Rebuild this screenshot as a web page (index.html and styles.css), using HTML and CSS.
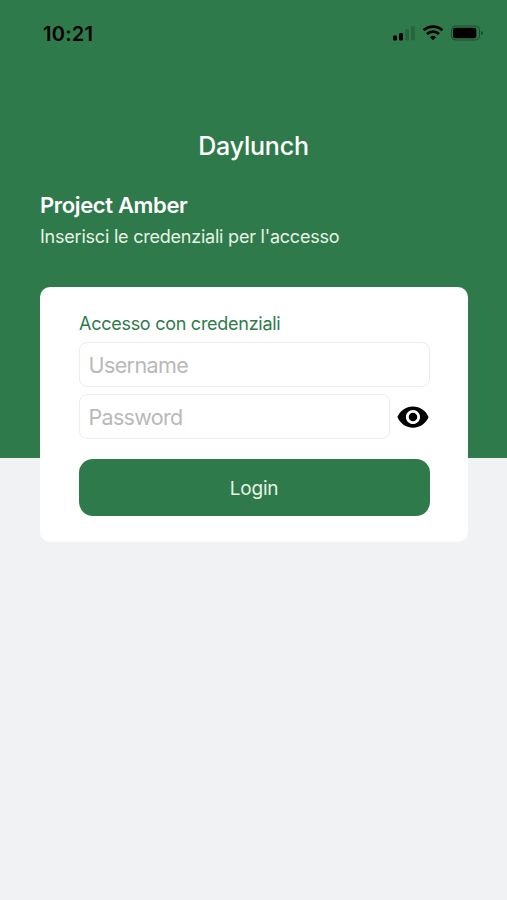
FILE: index.html
```html
<!DOCTYPE html>
<html lang="it">
<head>
<meta charset="utf-8">
<title>Daylunch</title>
<link rel="stylesheet" href="styles.css">
</head>
<body>
<div class="status">
  <span class="clock">10:21</span>
  <svg class="status-icons" width="92" height="18" viewBox="0 0 92 18">
    <g>
      <rect x="1" y="11.500" width="4" height="5" rx="1.200"/>
      <rect x="7" y="9" width="4" height="7.500" rx="1.200"/>
      <g opacity=".16"><rect x="13" y="5" width="4" height="11.500" rx="1.200"/><rect x="19" y="2" width="4" height="14.500" rx="1.200"/></g>
    </g>
    <g fill="none" stroke="#000" stroke-width="2.800">
      <path d="M31.700 6.300a13.500 13.500 0 0 1 18.600 0"/>
      <path d="M35 10a8.600 8.600 0 0 1 12 0"/>
    </g>
    <path d="M41 16.300l-3-3.100a4.400 4.400 0 0 1 6 0z"/>
    <rect x="59.500" y="2" width="28" height="14" rx="4" fill="none" stroke="#000" stroke-opacity=".38"/>
    <rect x="61" y="3.800" width="23.400" height="10.400" rx="2.200"/>
    <path d="M89.200 7q1.700.6 1.700 2t-1.700 2z" opacity=".5"/>
  </svg>
</div>
<h1 class="brand"><span>Daylunch</span></h1>
<main class="content">
  <h2 class="project"><span>Project Amber</span></h2>
  <p class="intro"><span>Inserisci le credenziali per l'accesso</span></p>
  <form class="card">
    <p class="card-title"><span>Accesso con credenziali</span></p>
    <input class="field" type="text" placeholder="Username">
    <div class="password-row">
      <input class="field" type="password" placeholder="Password">
      <svg class="eye" width="34" height="34" viewBox="0 0 24 24"><path d="M12 4.500C7 4.500 2.730 7.610 1 12c1.730 4.390 6 7.500 11 7.500s9.270-3.110 11-7.500c-1.730-4.390-6-7.500-11-7.500zM12 17c-2.760 0-5-2.240-5-5s2.240-5 5-5 5 2.240 5 5-2.240 5-5 5zm0-8c-1.660 0-3 1.340-3 3s1.340 3 3 3 3-1.340 3-3-1.340-3-3-3z"/></svg>
    </div>
    <button class="login" type="button">Login</button>
  </form>
</main>
</body>
</html>
```
FILE: styles.css
```css
* { box-sizing: border-box; }
body {
  margin: 0;
  min-height: 900px;
  font-family: Inter, "Liberation Sans", sans-serif;
  color: #fff;
  background: linear-gradient(#2f7a4b 458px, #f1f2f4 458px);
}
h1, h2, p { margin: 0; }
.status {
  height: 66px;
  padding: 0 23px 0 43px;
  display: flex;
  align-items: center;
  justify-content: space-between;
  color: #000;
}
.clock { padding-top: 1px; font-size: 20px; font-weight: 600; letter-spacing: 0.250px; }
.brand {
  margin-top: 62px;
  text-align: center;
  font-size: 25px;
  line-height: 37px;
  font-weight: 500;
  letter-spacing: -0.200px;
}
.content { padding: 25px 39px 0 40px; }
.project { font-size: 22px; line-height: 30px; font-weight: 600; letter-spacing: -0.350px; }
.intro { margin-top: 4px; font-size: 18px; line-height: 26px; letter-spacing: -0.220px; color: #e6f3e4; }
.card {
  margin-top: 37px;
  height: 255px;
  padding: 24px 38.500px 26px 38.500px;
  border-radius: 10px;
  background: #fff;
}
.card-title { padding-left: 0.500px; font-size: 18px; line-height: 26px; letter-spacing: -0.270px; color: #2f7a4b; }
.field {
  display: block;
  width: 100%;
  min-width: 0;
  height: 45px;
  margin-top: 5px;
  padding: 0 9px;
  border: 1px solid #ececec;
  border-radius: 8px;
  background: #fff;
  font: 21.500px Inter, "Liberation Sans", sans-serif;
  letter-spacing: -0.600px;
}
.field::placeholder { color: #b9b9b9; }
.password-row { margin-top: 7px; display: flex; align-items: center; gap: 6px; }
.password-row .field { flex: 1; margin: 0; letter-spacing: -0.700px; }
.eye { flex: none; }
.login {
  display: block;
  width: 100%;
  height: 57px;
  margin-top: 20px;
  padding: 1px 0 0;
  border: 0;
  border-radius: 14px;
  background: #2f7a4b;
  color: #e6f3e4;
  font: 19px Inter, "Liberation Sans", sans-serif;
  letter-spacing: -0.200px;
}
```
